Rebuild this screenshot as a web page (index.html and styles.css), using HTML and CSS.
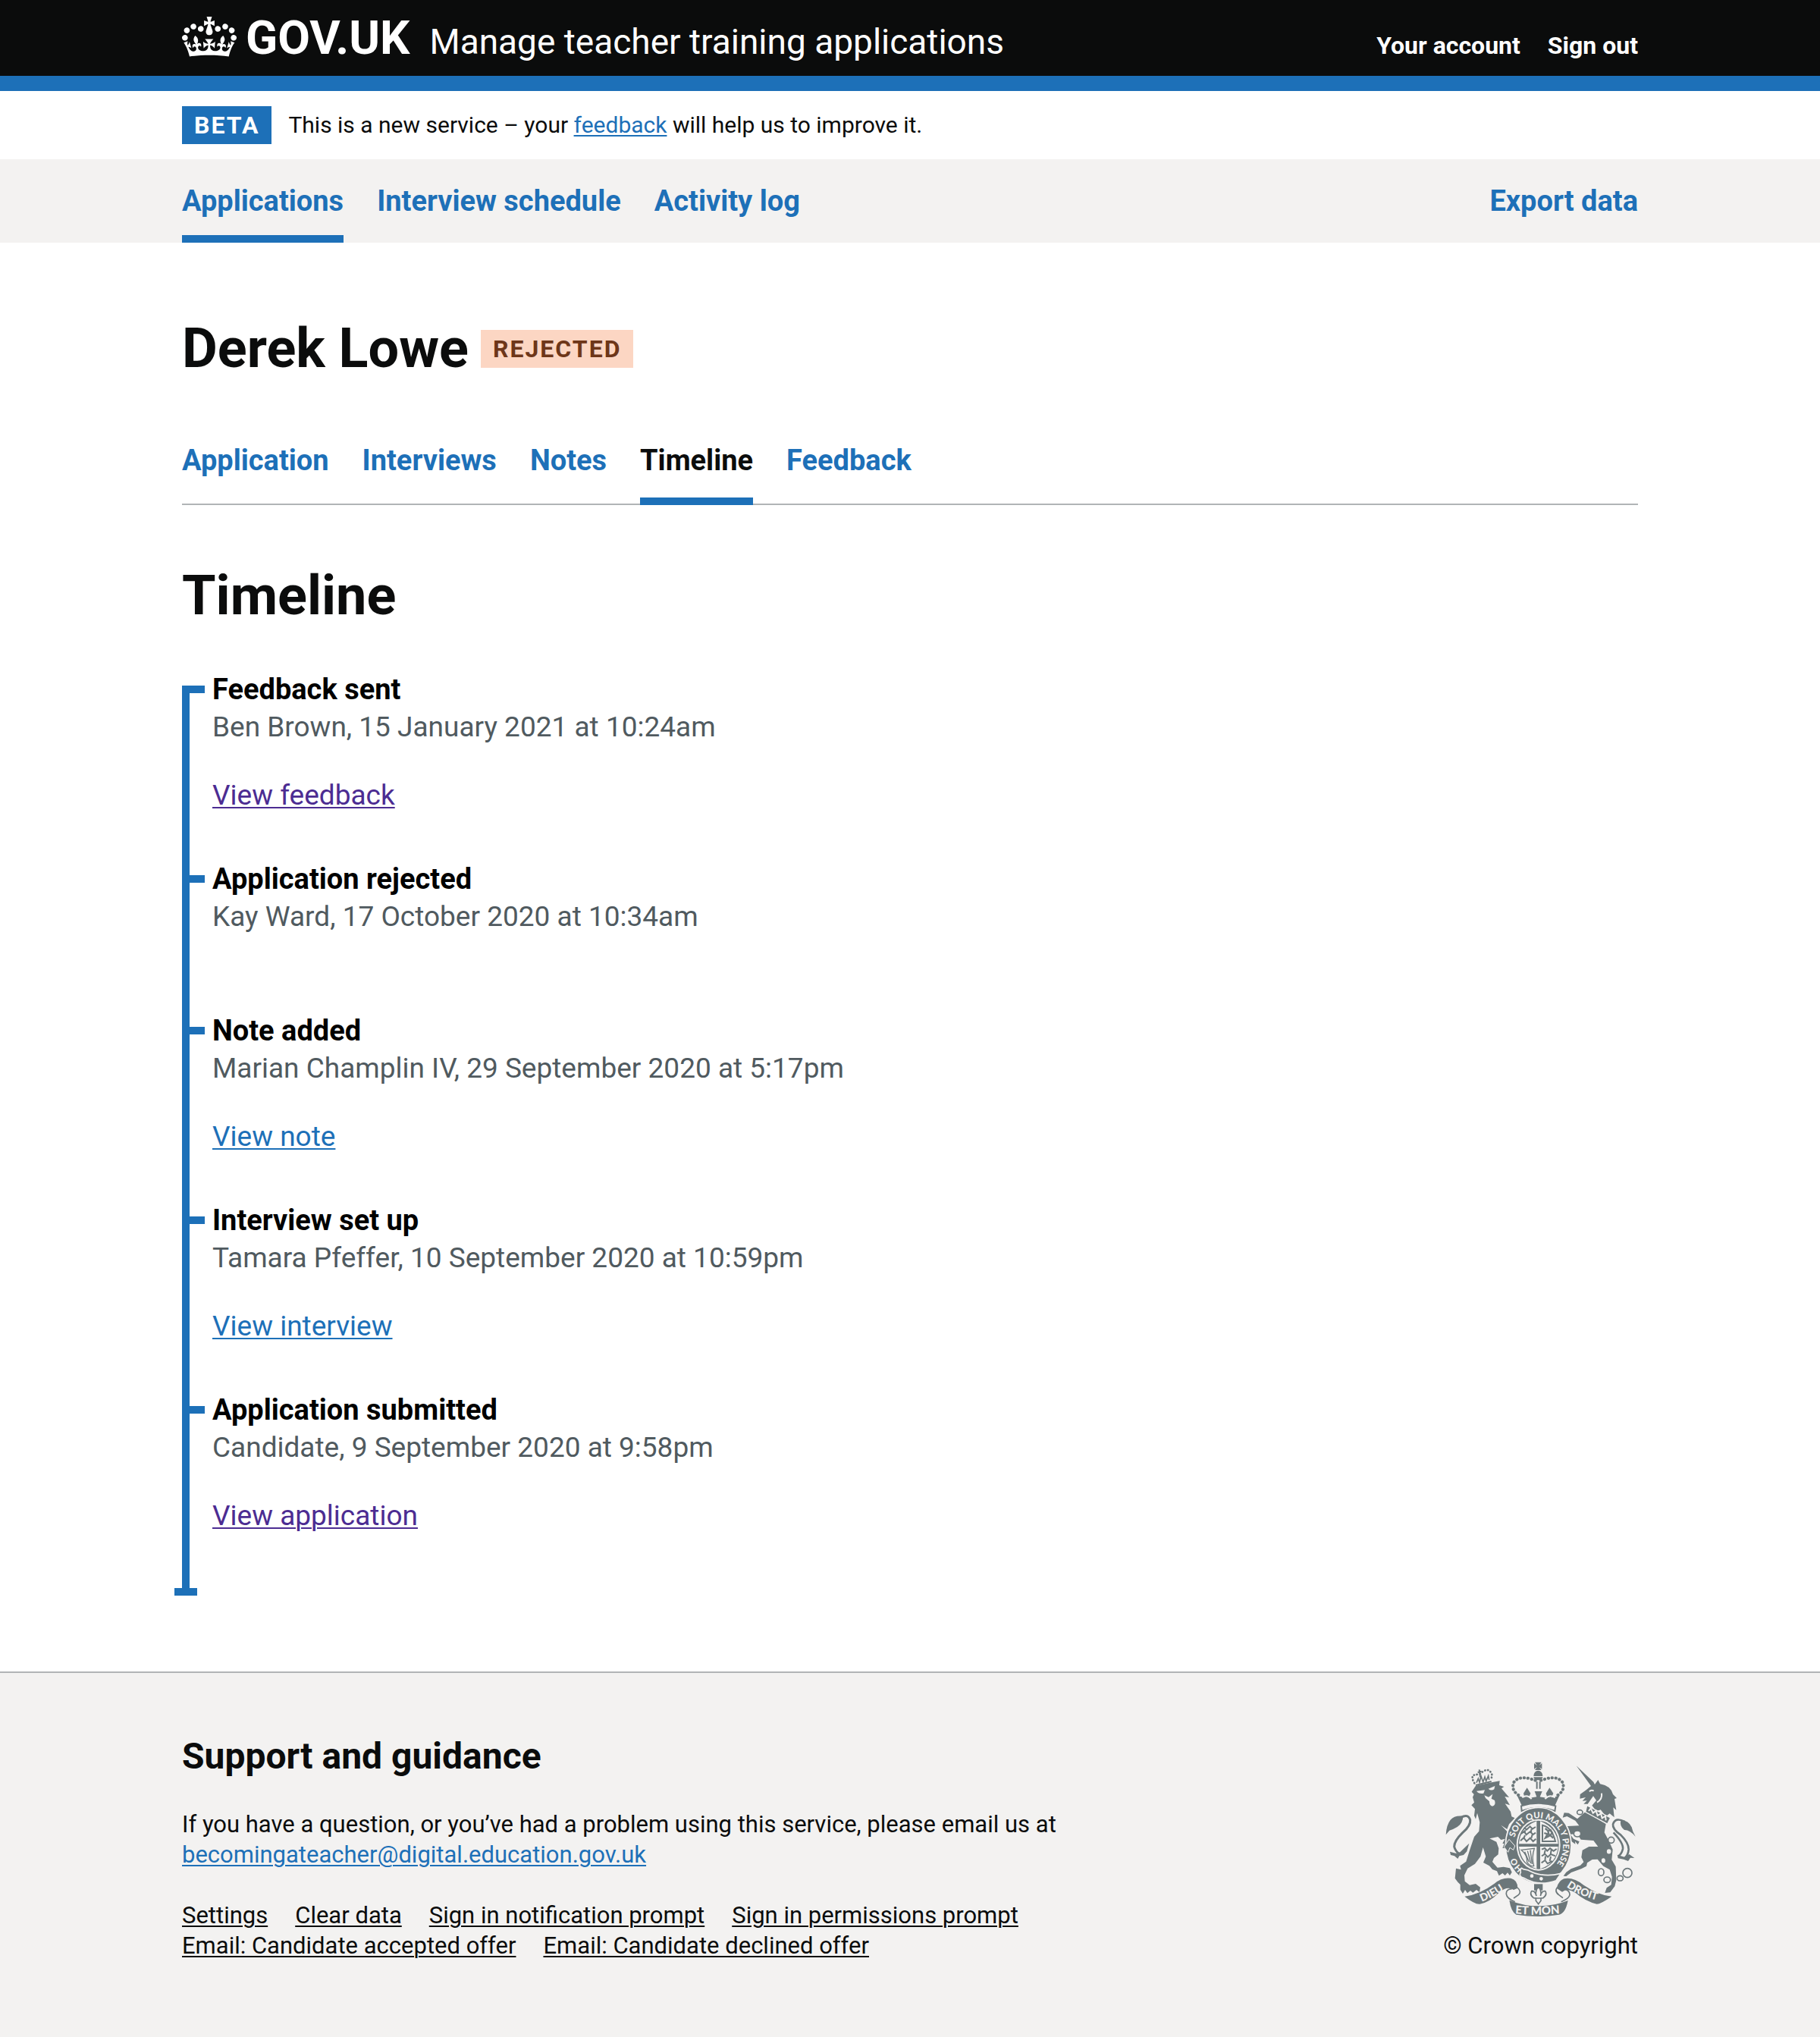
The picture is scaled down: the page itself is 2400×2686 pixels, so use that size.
FILE: index.html
```html
<!DOCTYPE html>
<html lang="en">
<head>
<meta charset="utf-8">
<meta name="viewport" content="width=device-width, initial-scale=1">
<title>Derek Lowe – Timeline – Manage teacher training applications</title>
<link rel="stylesheet" href="styles.css">
</head>
<body>
<header class="header">
  <div class="container header-row">
    <a class="logo" href="#"><svg class="crown" viewBox="0 0 132 97" aria-hidden="true"><path fill="currentColor" fill-rule="evenodd" d="M25 30.2c3.5 1.5 7.7-.2 9.1-3.7 1.5-3.6-.2-7.8-3.9-9.2-3.6-1.4-7.6.3-9.1 3.9-1.4 3.5.3 7.5 3.9 9zM9 39.5c3.6 1.5 7.8-.2 9.2-3.7 1.5-3.6-.2-7.8-3.9-9.1-3.6-1.5-7.6.2-9.1 3.8-1.4 3.5.3 7.5 3.8 9zM4.4 57.2c3.5 1.5 7.7-.2 9.1-3.8 1.5-3.6-.2-7.7-3.9-9.1-3.5-1.5-7.6.3-9.1 3.8-1.4 3.5.3 7.6 3.9 9.1zm38.3-21.4c3.5 1.5 7.7-.2 9.1-3.8 1.5-3.6-.2-7.7-3.9-9.1-3.6-1.5-7.6.3-9.1 3.8-1.3 3.6.4 7.7 3.9 9.1zm64.4-5.6c-3.6 1.5-7.8-.2-9.1-3.7-1.5-3.6.2-7.8 3.8-9.2 3.6-1.4 7.7.3 9.2 3.9 1.3 3.5-.4 7.5-3.9 9zm15.9 9.3c-3.6 1.5-7.7-.2-9.1-3.7-1.5-3.6.2-7.8 3.7-9.1 3.6-1.5 7.7.2 9.2 3.8 1.5 3.5-.3 7.5-3.8 9zm4.7 17.7c-3.6 1.5-7.8-.2-9.2-3.8-1.5-3.6.2-7.7 3.9-9.1 3.6-1.5 7.7.3 9.2 3.8 1.3 3.5-.4 7.6-3.9 9.1zM89.3 35.8c-3.6 1.5-7.8-.2-9.2-3.8-1.4-3.6.2-7.7 3.9-9.1 3.6-1.5 7.7.3 9.2 3.8 1.4 3.6-.3 7.7-3.9 9.1zM69.7 17.7l8.9 4.7V9.3l-8.9 2.8c-.2-.3-.5-.6-.9-.9L72.4 0H59.6l3.5 11.2c-.3.3-.6.5-.9.9l-8.8-2.8v13.1l8.8-4.7c.3.3.6.7.9.9l-5 15.4v.1c-.2.8-.4 1.6-.4 2.4 0 4.1 3.1 7.5 7 8.1h.2c.3 0 .7.1 1 .1.4 0 .7 0 1-.1h.2c4-.6 7.1-4.1 7.1-8.1 0-.8-.1-1.7-.4-2.4V34l-5.1-15.4c.4-.2.7-.6 1-.9zM66 92.8c16.9 0 32.8 1.1 47.1 3.2 4-16.9 8.9-26.7 14-33.5l-9.6-3.4c1 4.9 1.1 7.2 0 10.2-1.5-1.4-3-4.3-4.2-8.7L108.6 76c2.8-2 5-3.2 7.5-3.3-4.4 9.4-10 11.9-13.6 11.2-4.3-.8-6.3-4.6-5.6-7.9 1-4.7 5.7-5.9 8-.5 4.3-8.7-3-11.4-7.6-8.8 7.1-7.2 7.9-13.5 2.1-21.1-8 6.1-8.1 12.3-4.5 20.8-4.7-5.4-12.1-2.5-9.5 6.2 3.4-5.2 7.9-2 7.2 3.1-.6 4.3-6.4 7.8-13.5 7.2-10.3-.9-10.9-8-11.2-13.8 2.5-.5 7.1 1.8 11 7.3L80.2 60c-4.1 4.4-8 5.3-12.3 5.4 1.4-4.4 8-11.6 8-11.6H55.5s6.4 7.2 7.9 11.6c-4.2-.1-8-1-12.3-5.4l1.4 16.4c3.9-5.5 8.5-7.7 10.9-7.3-.3 5.8-.9 12.8-11.1 13.8-7.2.6-12.9-2.9-13.5-7.2-.7-5 3.8-8.3 7.1-3.1 2.7-8.7-4.6-11.6-9.4-6.2 3.7-8.5 3.6-14.7-4.6-20.8-5.8 7.6-5 13.9 2.2 21.1-4.7-2.6-11.9.1-7.7 8.8 2.3-5.5 7.1-4.2 8.1.5.7 3.3-1.3 7.1-5.7 7.9-3.5.7-9-1.8-13.5-11.2 2.5.1 4.7 1.3 7.5 3.3l-4.7-15.4c-1.2 4.4-2.7 7.2-4.3 8.7-1.1-3-.9-5.3 0-10.2l-9.5 3.4c5 6.9 9.9 16.7 14 33.5 14.8-2.1 30.8-3.2 47.7-3.2z"/></svg><span>GOV.UK</span></a>
    <a class="product-name" href="#">Manage teacher training applications</a>
    <nav class="account-nav" aria-label="Account">
      <a href="#">Your account</a>
      <a href="#">Sign out</a>
    </nav>
  </div>
</header>

<div class="container phase-banner">
  <strong class="tag">BETA</strong>
  <span>This is a new service – your <a class="link" href="#">feedback</a> will help us to improve it.</span>
</div>

<nav class="primary-nav" aria-label="Primary navigation">
  <div class="container nav-list">
    <a class="nav-link nav-link-current" href="#" aria-current="page">Applications</a>
    <a class="nav-link" href="#">Interview schedule</a>
    <a class="nav-link" href="#">Activity log</a>
    <a class="nav-link nav-link-end" href="#">Export data</a>
  </div>
</nav>

<main class="container main">
  <div class="title-row">
    <h1 class="heading">Derek Lowe</h1>
    <strong class="tag tag-rejected">REJECTED</strong>
  </div>

  <nav class="tabs" aria-label="Application sections">
    <a class="tab" href="#">Application</a>
    <a class="tab" href="#">Interviews</a>
    <a class="tab" href="#">Notes</a>
    <a class="tab tab-current" href="#" aria-current="page">Timeline</a>
    <a class="tab" href="#">Feedback</a>
  </nav>

  <h2 class="heading">Timeline</h2>

  <ol class="timeline">
    <li class="event">
      <h3 class="event-title">Feedback sent</h3>
      <p class="event-byline">Ben Brown, 15 January 2021 at 10:24am</p>
      <div class="event-actions"><a class="link link-visited" href="#">View feedback</a></div>
    </li>
    <li class="event">
      <h3 class="event-title">Application rejected</h3>
      <p class="event-byline">Kay Ward, 17 October 2020 at 10:34am</p>
      <div class="event-actions"></div>
    </li>
    <li class="event">
      <h3 class="event-title">Note added</h3>
      <p class="event-byline">Marian Champlin IV, 29 September 2020 at 5:17pm</p>
      <div class="event-actions"><a class="link" href="#">View note</a></div>
    </li>
    <li class="event">
      <h3 class="event-title">Interview set up</h3>
      <p class="event-byline">Tamara Pfeffer, 10 September 2020 at 10:59pm</p>
      <div class="event-actions"><a class="link" href="#">View interview</a></div>
    </li>
    <li class="event">
      <h3 class="event-title">Application submitted</h3>
      <p class="event-byline">Candidate, 9 September 2020 at 9:58pm</p>
      <div class="event-actions"><a class="link link-visited" href="#">View application</a></div>
    </li>
  </ol>
</main>

<footer class="footer">
  <div class="container footer-row">
    <div class="footer-main">
      <h2 class="footer-heading">Support and guidance</h2>
      <p class="footer-text">If you have a question, or you’ve had a problem using this service, please email us at <a class="link" href="#">becomingateacher@digital.education.gov.uk</a></p>
      <ul class="footer-links">
        <li><a href="#">Settings</a></li>
        <li><a href="#">Clear data</a></li>
        <li><a href="#">Sign in notification prompt</a></li>
        <li><a href="#">Sign in permissions prompt</a></li>
        <li><a href="#">Email: Candidate accepted offer</a></li>
        <li><a href="#">Email: Candidate declined offer</a></li>
      </ul>
    </div>
    <a class="copyright" href="#">
      <svg class="crest" viewBox="70 62 756 618" aria-hidden="true">
        <defs>
          <path id="motto-start" d="M377 488A98 108 0 0 1 342 420"/>
          <path id="motto-ring" d="M344 365A98 108 0 1 1 480 494"/>
          <path id="motto-left" d="M214 619Q266 600 330 552"/>
          <path id="motto-mid" d="M346 666Q438 674 540 664"/>
          <path id="motto-right" d="M549 560Q602 598 696 620"/>
        </defs>

        <!-- lion -->
        <g fill="currentColor">
          <path d="M174 184L190 160L245 148L285 141L283 158L302 164L292 171L322 206L305 203L325 237L306 231L328 262L332 282L345 288L322 312L314 332L290 316L318 345L338 375L346 398L340 415L325 405L318 423L308 408L296 406L303 390L296 388L306 370L290 374L278 362L245 369L272 382L281 408L279 432L262 446L256 461L276 484L300 481L325 486L333 502L325 515L316 504L306 515L296 506L282 516L274 498L256 491L244 477L220 464L230 440L219 404L209 440L187 469L158 487L145 514L147 538L166 553L190 548L208 562L205 581L193 572L179 583L169 575L157 585L148 572L139 587L129 571L129 551L119 541L108 526L112 487L132 492L128 477L152 460L166 415L184 362L203 340L206 304L196 268L190 292L184 278L187 252L173 237L184 226L178 205L183 194Z"/>
          <path d="M72 354Q74 315 90 295Q106 276 140 280Q140 308 117 323Q99 334 86 337Q80 344 72 354Z"/>
          <path d="M88 421L111 427L128 423L164 388L155 420L142 434L125 438L119 449L106 438L91 434Z"/>
        </g>
        <path d="M132 285Q160 270 168 295Q171 318 138 346Q105 378 105 401Q109 418 125 430" fill="none" stroke="currentColor" stroke-width="9"/>
        <g fill="#f3f2f1">
          <path d="M193 181L226 177L221 190Q203 194 193 181ZM240 172L266 161L263 174Q251 182 240 172ZM224 198L241 205L257 193L252 211L265 218Q271 238 256 241Q244 239 244 222L229 209Z"/>
        </g>
        <!-- lion's crown -->
        <g fill="none" stroke="currentColor">
          <path d="M190 158L252 143" stroke-width="6"/>
          <path d="M193 148L200 132L205 147L211 122L219 145L226 125L231 142L240 121L243 137" stroke-width="5"/>
          <path d="M185 150Q162 112 204 116Q241 80 254 116Q255 125 249 137" stroke-width="8" stroke-linecap="round" stroke-dasharray="1 11"/>
          <path d="M204 96L208 126M198 107L213 103" stroke-width="6"/>
        </g>

        <!-- unicorn -->
        <g fill="currentColor">
          <path d="M588 81L656 145L661 155L674 137L682 153Q724 160 733 194L748 209L739 212L746 256L734 246L738 285L720 270L705 281L684 255L667 261L650 238L667 218L655 201L633 232L617 232L630 219L612 220L625 206L602 211L603 194L627 177L646 161Z"/>
          <path d="M624 263L705 311L699 345L718 381L732 412L728 453L744 480L746 534L740 558L722 582L701 584L708 564L726 552L729 520L720 492L695 478L672 451L651 452L631 465L628 478L609 488L568 503L548 518L537 517L548 502L567 489L604 475L617 462L608 443L612 415L638 401L674 401L656 377L606 373L592 351L564 352L577 370L600 381L594 393L583 380L584 391L565 377L548 345L553 320L599 318L584 298L551 281L534 286L540 267L558 268L592 291Z"/>
          <path d="M822 361Q799 334 778 335Q758 321 764 297Q794 296 807 324Q810 342 822 361ZM750 433L781 443L797 431L818 446L802 445L793 458L775 451L753 447Z"/>
        </g>
        <path d="M779 302Q743 283 733 312Q730 331 764 355Q796 387 795 412Q793 436 779 446M735 345Q775 387 772 410Q767 431 754 438" fill="none" stroke="currentColor" stroke-width="8"/>
        <path d="M640 183Q645 176 657 180M688 190Q692 213 670 226" fill="none" stroke="#f3f2f1" stroke-width="6"/>
        <path d="M630 238L723 287L711 311L624 264Z" fill="currentColor" stroke="#f3f2f1" stroke-width="4"/>
        <path d="M637 260L645 249L654 268L666 259L672 278L685 270L690 288L703 280L705 297" fill="none" stroke="#f3f2f1" stroke-width="6"/>
        <!-- chain -->
        <g fill="#f3f2f1" stroke="currentColor" stroke-width="5">
          <ellipse cx="602" cy="265" rx="11" ry="9"/><ellipse cx="592" cy="350" rx="14" ry="12"/>
          <ellipse cx="726" cy="375" rx="12" ry="12"/><ellipse cx="717" cy="420" rx="11" ry="12"/>
          <ellipse cx="695" cy="456" rx="10" ry="12"/><ellipse cx="686" cy="502" rx="11" ry="14"/>
          <ellipse cx="710" cy="532" rx="13" ry="11"/><ellipse cx="761" cy="526" rx="12" ry="10"/>
          <circle cx="790" cy="505" r="18"/>
        </g>

        <!-- royal crown -->
        <g fill="none" stroke="currentColor">
          <path d="M424 67L450 67L441 80L452 71L452 94L441 86L450 98L424 98L433 86L421 94L421 71L433 80Z" fill="currentColor" stroke="none"/>
          <path d="M419 122A18 22 0 0 1 455 122ZM419 126H455A18 12 0 0 1 419 126Z" fill="currentColor" stroke="none"/>
          <path d="M359 197Q328 176 341 146Q360 121 405 132L429 140M515 197Q546 176 533 146Q514 121 469 132L445 140" stroke-width="12" stroke-linecap="round" stroke-dasharray="1 14"/>
          <path d="M432 144V172M444 144V172" stroke-width="6"/>
          <path d="M354 199L383 207L379 190L393 168L407 190L399 209L431 204L423 182H453L444 204L474 209L468 190L482 168L497 190L490 207L521 199L503 240Q438 220 373 240Z" fill="currentColor" stroke="none"/>
          <path d="M374 207Q393 192 411 212M464 212Q484 192 504 207" stroke="#f3f2f1" stroke-width="6"/>
          <path d="M370 240Q438 219 506 240L503 260Q438 235 372 260Z" fill="#f3f2f1" stroke-width="6"/>
        </g>

        <!-- garter and shield -->
        <ellipse cx="438" cy="396" rx="130" ry="150" fill="currentColor" stroke="#f3f2f1" stroke-width="5"/>
        <ellipse cx="438" cy="394" rx="87" ry="102" fill="#f3f2f1"/>
        <ellipse cx="438" cy="394" rx="81" ry="96" fill="currentColor"/>
        <g fill="#f3f2f1">
          <path d="M431 300V390H361Q365 326 431 300ZM445 300V390H516Q511 326 445 300ZM361 401H431V489Q369 470 361 401ZM445 401H516Q510 468 445 489Z"/>
        </g>
        <g fill="none" stroke="currentColor" stroke-width="6">
          <path d="M382 326L391 334L405 321L414 331L427 323M370 350L382 341L390 354L405 342L417 353L427 346M367 378L380 366L391 380L405 367L417 380L428 370M386 336L383 348M410 332L409 344M385 356L380 368M414 353L410 367"/>
          <path d="M454 316Q492 325 505 380H454Z"/>
          <path d="M465 329L477 339L486 335L493 347L484 356L497 367M461 347L474 351L466 366L482 358M476 340L481 359" stroke-width="7"/>
          <path d="M370 414L422 408Q410 443 420 477Q407 482 393 463Q395 434 370 414ZM384 421L401 462M395 418L408 467M406 415L413 470" stroke-width="4"/>
          <path d="M451 412L463 407L473 418L484 407L498 418L510 410M451 438L464 430L475 442L487 431L505 438M450 465L464 455L474 468L493 458M465 415L461 432M489 414L486 432M466 439L464 457M487 440L483 458"/>
        </g>
        <g class="crest-text crest-ring" fill="#f3f2f1">
          <text><textPath href="#motto-start">HO</textPath></text>
          <text><textPath href="#motto-ring">SOIT QUI MAL Y PENSE</textPath></text>
        </g>
        <path d="M322 372L345 398L339 414L325 405L318 423L302 402Z" fill="currentColor" stroke="#f3f2f1" stroke-width="3"/>
        <path d="M378 490Q365 480 368 503Q358 518 380 525Q438 560 508 535L527 507Q455 526 397 494Z" fill="currentColor" stroke="#f3f2f1" stroke-width="5"/>
        <circle cx="412" cy="517" r="7" fill="#f3f2f1"/><circle cx="449" cy="528" r="7" fill="#f3f2f1"/>

        <!-- motto scroll -->
        <path d="M421 549H455V574H421Z" fill="currentColor"/>
        <path d="M438 559Q453 577 446 596Q451 574 465 577Q474 591 457 604L448 605V615L438 628L428 615V605L419 604Q402 591 411 577Q425 574 430 596Q423 577 438 559ZM423 605H453" fill="#f3f2f1" stroke="currentColor" stroke-width="5"/>
        <g fill="currentColor">
          <path d="M146 598Q206 590 264 547Q294 521 329 526Q356 533 356 565L340 572Q315 554 282 583Q243 622 206 628Q187 630 146 598Z"/>
          <path d="M728 598Q678 594 617 553Q575 520 539 528Q518 535 510 565L532 580Q554 563 586 585Q626 619 669 628Q684 628 728 598Z"/>
          <path d="M323 613Q380 636 438 636Q505 635 555 614Q545 665 520 670Q438 684 350 670Q330 658 323 613Z"/>
        </g>
        <path d="M333 568Q309 569 311 589Q313 606 345 619M355 563Q373 579 359 592L340 605M535 568Q563 572 562 592Q560 606 528 619M512 563Q501 579 519 592L535 604" fill="none" stroke="currentColor" stroke-width="5"/>
        <g class="crest-text" fill="#f3f2f1">
          <text class="crest-side"><textPath href="#motto-left">DIEU</textPath></text>
          <text class="crest-mid"><textPath href="#motto-mid">ET MON</textPath></text>
          <text class="crest-side"><textPath href="#motto-right">DROIT</textPath></text>
        </g>
      </svg>
      <span>© Crown copyright</span>
    </a>
  </div>
</footer>
</body>
</html>
```
FILE: styles.css
```css
:root {
  --blue: #1d70b8;
  --black: #0b0c0c;
  --grey: #f3f2f1;
  --line: #b1b4b6;
}

* {
  box-sizing: border-box;
}

body {
  margin: 0;
  background: #fff;
  color: var(--black);
  font-family: Roboto, "Liberation Sans", sans-serif;
  font-size: 31px;
  line-height: 40px;
}

h1, h2, h3, p, ol, ul {
  margin: 0;
  padding: 0;
}

ol, ul {
  list-style: none;
}

.container {
  width: 80%;
  margin: 0 auto;
}

.link {
  color: var(--blue);
  text-decoration-thickness: 2px;
  text-underline-offset: 3px;
}

.link-visited {
  color: #4c2c92;
}

/* Header */
.header {
  background: var(--black);
  border-bottom: 20px solid var(--blue);
  color: #fff;
}

.header a {
  color: inherit;
  text-decoration: none;
}

.header-row {
  display: flex;
  align-items: baseline;
  padding: 20px 0 10px;
  line-height: 60px;
}

.logo {
  margin-right: 26px;
  font-size: 62px;
  font-weight: 700;
}

.crown {
  width: 72px;
  height: 53px;
  margin-right: 12px;
  vertical-align: -4px;
}

.product-name {
  font-size: 46px;
}

.account-nav {
  display: flex;
  gap: 36px;
  margin-left: auto;
  font-size: 32px;
  font-weight: 700;
}

/* Phase banner */
.phase-banner {
  display: flex;
  align-items: center;
  gap: 22px;
  padding: 20px 0;
  font-size: 30px;
  line-height: 50px;
}

.tag {
  padding: 0 16px;
  background: var(--blue);
  color: #fff;
  font-size: 32px;
  font-weight: 700;
  line-height: 50px;
  letter-spacing: 2px;
}

.tag-rejected {
  background: #fcd6c3;
  color: #6e3619;
}

/* Primary navigation */
.primary-nav {
  background: var(--grey);
}

.nav-list {
  display: flex;
  gap: 44px;
}

.nav-link {
  padding: 30px 0 20px;
  border-bottom: 10px solid transparent;
  color: var(--blue);
  font-size: 38px;
  font-weight: 700;
  line-height: 50px;
  text-decoration: none;
}

.nav-link-current {
  border-color: var(--blue);
}

.nav-link-end {
  margin-left: auto;
}

/* Main content */
.main {
  padding: 100px 0;
}

.heading {
  font-size: 72px;
  font-weight: 700;
  line-height: 80px;
}

.title-row {
  display: flex;
  align-items: center;
  gap: 16px;
}

.tabs {
  display: flex;
  gap: 44px;
  margin: 82px 0 80px;
  border-bottom: 2px solid var(--line);
}

.tab {
  margin-bottom: -2px;
  padding-bottom: 24px;
  border-bottom: 10px solid transparent;
  color: var(--blue);
  font-size: 38px;
  font-weight: 700;
  line-height: 50px;
  text-decoration: none;
}

.tab-current {
  border-color: var(--blue);
  color: var(--black);
}

/* Timeline */
.timeline {
  position: relative;
  margin-top: 58px;
  padding-bottom: 20px;
  font-size: 37px;
  line-height: 50px;
}

.timeline::before {
  content: "";
  position: absolute;
  top: 20px;
  bottom: 0;
  left: 0;
  width: 10px;
  background: var(--blue);
}

.timeline::after {
  content: "";
  position: absolute;
  bottom: 0;
  left: -10px;
  width: 30px;
  height: 10px;
  background: var(--blue);
}

.event {
  position: relative;
  padding: 0 0 60px 40px;
}

.event::before {
  content: "";
  position: absolute;
  top: 20px;
  left: 0;
  width: 30px;
  height: 10px;
  background: var(--blue);
}

.event-title {
  color: #000;
  font-size: 38px;
  font-weight: 700;
}

.event-byline {
  color: #505a5f;
}

.event-actions {
  padding-top: 40px;
}

/* Footer */
.footer {
  padding: 80px 0 100px;
  border-top: 2px solid var(--line);
  background: var(--grey);
}

.footer-row {
  display: flex;
  align-items: flex-end;
  justify-content: space-between;
}

.footer-main {
  width: 64%;
}

.footer-heading {
  font-size: 48px;
  font-weight: 700;
  line-height: 60px;
}

.footer-text {
  margin: 40px 0;
}

.footer-links {
  display: flex;
  flex-wrap: wrap;
  column-gap: 36px;
}

.footer-links a {
  color: var(--black);
  text-decoration-thickness: 2px;
  text-underline-offset: 3px;
}

.copyright {
  display: flex;
  flex-direction: column;
  align-items: center;
  gap: 18px;
  color: var(--black);
  text-decoration: none;
}

.crest {
  width: 252px;
  height: 206px;
  color: #6c777a;
}

.crest-text {
  font-family: Lato, sans-serif;
  font-weight: 900;
}

.crest-ring {
  font-size: 34px;
}

.crest-side {
  font-size: 42px;
}

.crest-mid {
  font-size: 45px;
}
```
